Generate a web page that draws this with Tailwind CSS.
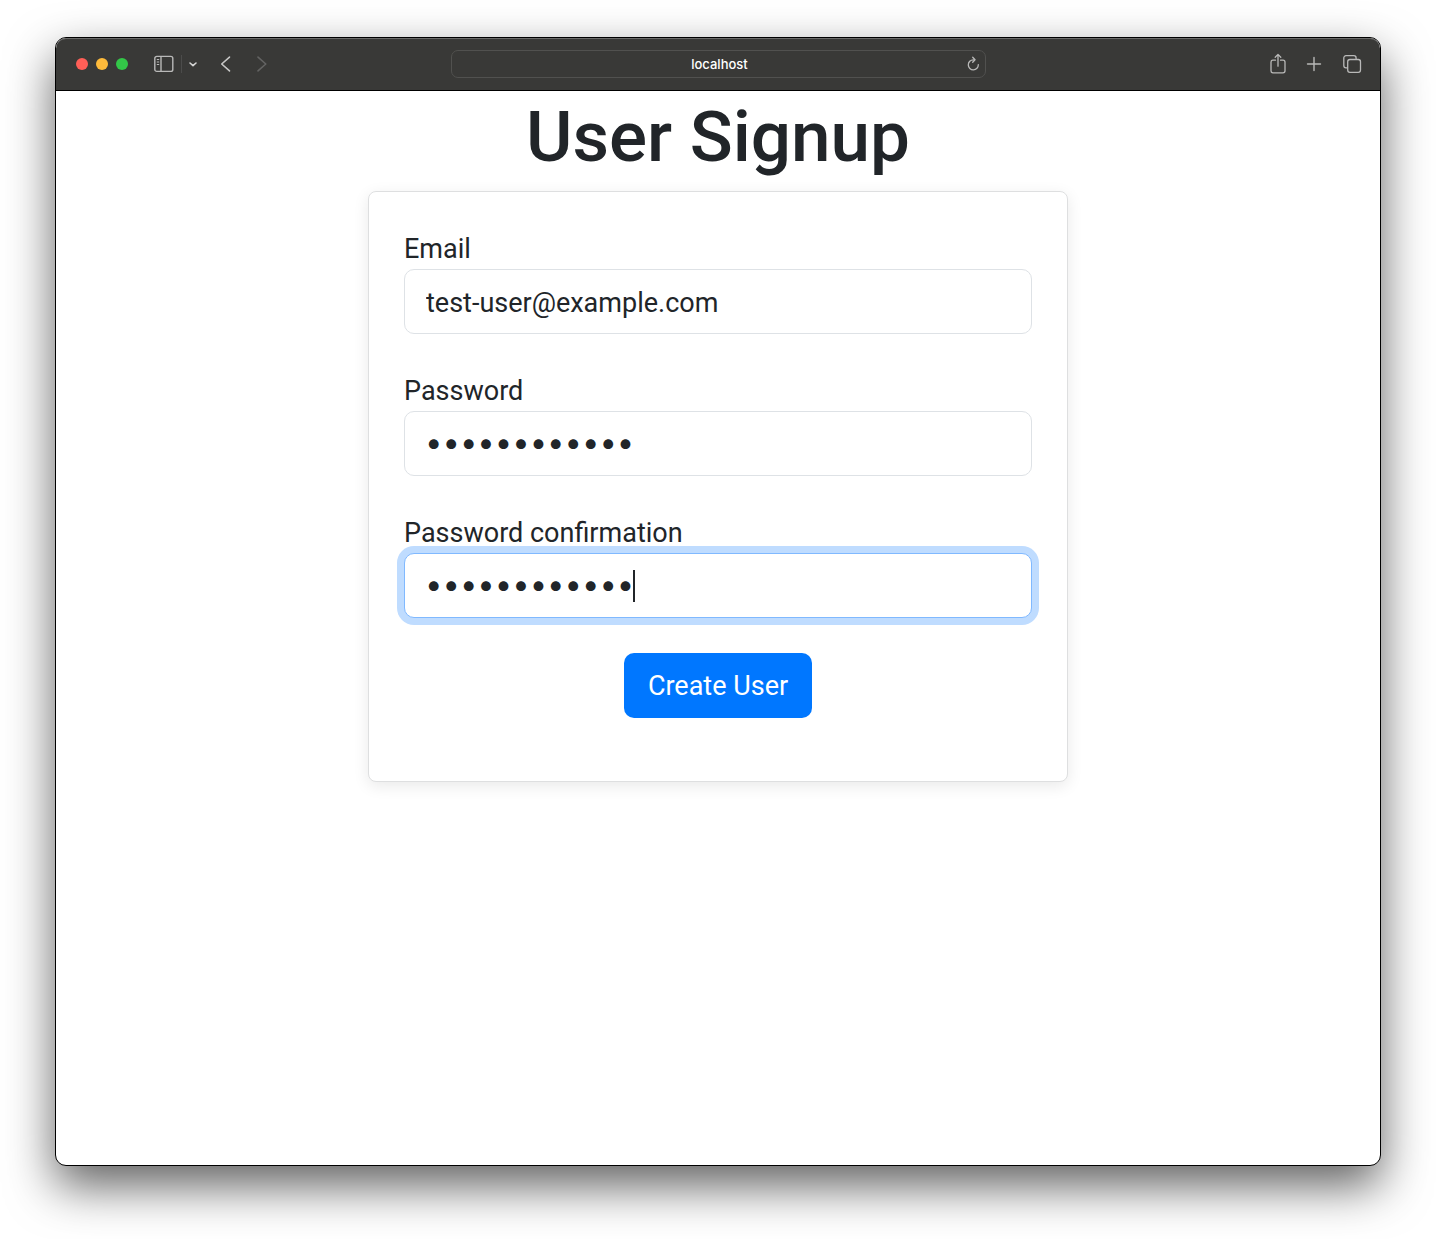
<!DOCTYPE html>
<html lang="en">
<head>
<meta charset="utf-8">
<meta name="viewport" content="width=device-width, initial-scale=1">
<title>User Signup</title>
<script src="https://cdn.jsdelivr.net/npm/@tailwindcss/browser@4"></script>
</head>
<body class="flex min-h-screen flex-col bg-white px-[55px] pt-[37px] pb-[73px] font-[Inter,sans-serif] text-[#212529]">
<div class="flex grow flex-col overflow-hidden rounded-[11px] border border-black bg-white shadow-[0_20px_48px_rgba(0,0,0,0.62)]">

  <!-- Browser toolbar -->
  <header class="grid h-[53px] shrink-0 grid-cols-[1fr_535px_1fr] items-center rounded-t-[10px] border-b border-black bg-[#393937] text-[#b9b9b8] shadow-[inset_0_1px_0_#6a6a69]">
    <div class="flex items-center pl-5">
      <div class="flex gap-2">
        <span class="size-3 rounded-full bg-[#ff5f57]"></span>
        <span class="size-3 rounded-full bg-[#febb3b]"></span>
        <span class="size-3 rounded-full bg-[#33c748]"></span>
      </div>
      <button type="button" aria-label="Sidebar" class="ml-[26px]">
        <svg class="block h-[18px] w-5" viewBox="0 0 20 18" fill="none" stroke="currentColor" stroke-width="1.4"><rect x=".8" y="1.4" width="18" height="15" rx="2"/><path d="M7 1.400v15"/><path d="M2.800 4.500h2.400M2.800 7h2.400M2.800 9.500h2.400" stroke-width="1"/></svg>
      </button>
      <span class="ml-[7px] h-[18px] w-px bg-[#4c4c4b]"></span>
      <button type="button" aria-label="Tab groups" class="ml-1.5">
        <svg class="block size-2.5" viewBox="0 0 10 10" fill="none" stroke="#d6d6d5" stroke-width="1.6" stroke-linecap="round" stroke-linejoin="round"><path d="M2 4l3 2.700L8 4"/></svg>
      </button>
      <button type="button" aria-label="Back" class="ml-5">
        <svg class="block size-[18px]" viewBox="0 0 18 18" fill="none" stroke="#c6c6c5" stroke-width="1.6" stroke-linecap="round" stroke-linejoin="round"><path d="M11.500 2.100L3.700 9l7.800 6.900"/></svg>
      </button>
      <button type="button" aria-label="Forward" class="ml-[18px]">
        <svg class="block size-[18px]" viewBox="0 0 18 18" fill="none" stroke="#636362" stroke-width="1.6" stroke-linecap="round" stroke-linejoin="round"><path d="M4 2.100L11.800 9 4 15.900"/></svg>
      </button>
    </div>
    <div class="flex h-7 items-center rounded-[7px] border border-[#51514f] pl-[23px] pr-1">
      <span class="grow text-center text-[13px] leading-5 font-medium text-white">localhost</span>
      <button type="button" aria-label="Reload">
        <svg class="block size-4" viewBox="0 0 16 16" fill="none" stroke="currentColor" stroke-width="1.3" stroke-linecap="round" stroke-linejoin="round"><path d="M13.300 8.600A5 5 0 1 1 8.300 3.800h1.300"/><path d="M7.700 1.200l2.300 2.600-2.300 2.500"/></svg>
      </button>
    </div>
    <div class="flex items-center justify-end pr-[18px]">
      <button type="button" aria-label="Share">
        <svg class="block h-[22px] w-5" viewBox="0 0 20 22" fill="none" stroke="currentColor" stroke-width="1.3" stroke-linecap="round" stroke-linejoin="round"><path d="M7.500 7.200H5a2 2 0 0 0-2 2v8.600a2 2 0 0 0 2 2h10a2 2 0 0 0 2-2V9.200a2 2 0 0 0-2-2h-2.500"/><path d="M10 13.200V1.500M7.200 4.200L10 1.400l2.800 2.800"/></svg>
      </button>
      <button type="button" aria-label="New tab" class="ml-[18px]">
        <svg class="block size-4" viewBox="0 0 16 16" fill="none" stroke="currentColor" stroke-width="1.4" stroke-linecap="round"><path d="M8 1.500v13M1.500 8h13"/></svg>
      </button>
      <button type="button" aria-label="Tab overview" class="ml-5">
        <svg class="block size-5" viewBox="0 0 20 20" fill="none" stroke="currentColor" stroke-width="1.3" stroke-linejoin="round"><rect x="5.700" y="5.500" width="12.800" height="12.800" rx="2.200"/><path d="M5.700 13.800H4a2.200 2.200 0 0 1-2.200-2.200V3.900A2.200 2.200 0 0 1 4 1.700h7.900a2.200 2.200 0 0 1 2.200 2.200v1.600"/></svg>
      </button>
    </div>
  </header>

  <!-- Signup page -->
  <main class="flex flex-col items-center font-[Roboto,sans-serif]">
    <h1 class="pt-1 pb-3 text-[71px] leading-[84px] font-medium">User Signup</h1>
    <form class="flex w-full max-w-[700px] flex-col gap-[35px] rounded-lg border border-[#dedfe0] bg-white px-[35px] pt-[35px] pb-[63px] text-[27px] shadow-[0_4px_16px_rgba(0,0,0,0.09)]">
      <div class="flex flex-col">
        <label for="email" class="pt-0.5 leading-10">Email</label>
        <input id="email" type="email" value="test-user@example.com" class="h-[65px] rounded-[10px] border border-[#dee2e6] bg-white px-[21px] pt-0.5 outline-none">
      </div>
      <div class="flex flex-col">
        <label for="password" class="pt-0.5 leading-10">Password</label>
        <input id="password" type="password" value="secretsecret" class="h-[65px] rounded-[10px] border border-[#dee2e6] bg-white px-5 pb-1 font-[Inter,sans-serif] text-[31px] outline-none">
      </div>
      <div class="relative flex flex-col">
        <label for="confirmation" class="pt-0.5 leading-10">Password confirmation</label>
        <input id="confirmation" type="password" value="secretsecret" class="h-[65px] rounded-[10px] border border-[#80b9ff] bg-white px-5 pb-1 font-[Inter,sans-serif] text-[31px] caret-transparent ring-[7px] ring-[#bfdcff] outline-none">
        <span class="absolute bottom-4 left-[229px] h-8 w-0.5 bg-[#212529]"></span>
      </div>
      <button type="submit" class="h-[65px] self-center rounded-[10px] bg-[#0077ff] px-6 pt-0.5 text-white">Create User</button>
    </form>
  </main>
</div>
</body>
</html>
